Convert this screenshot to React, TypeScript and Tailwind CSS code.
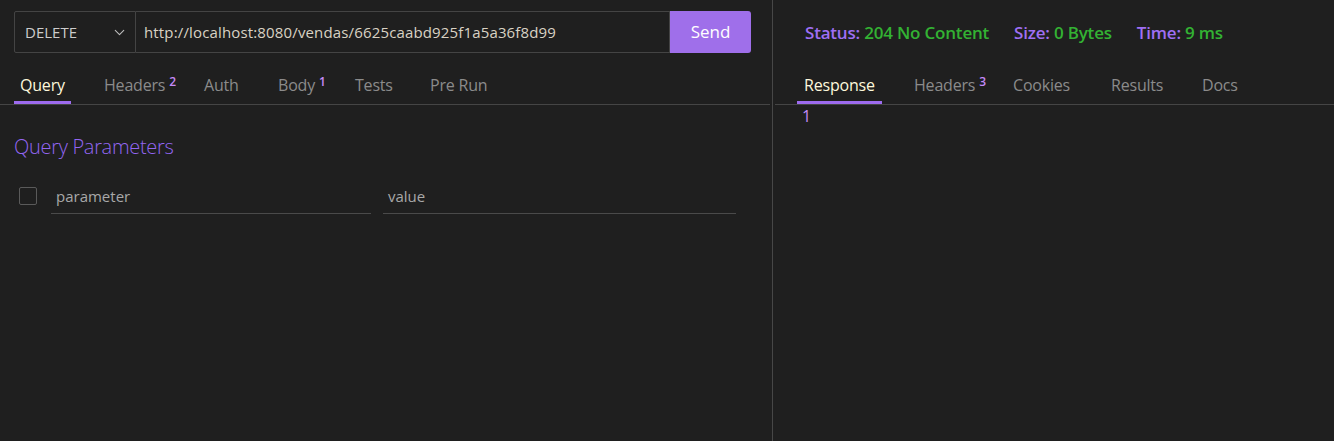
import { ChevronDown } from "lucide-react";

const font = { fontFamily: '"Open Sans", "Noto Sans", sans-serif' };

function Tab({ label, sup, active, w, pad = "px-[6px]" }: { label: string; sup?: string; active?: boolean; w?: string; pad?: string }) {
  return (
    <div className={"flex h-[50px] " + (w ?? "")}>
      <div
        className={
          "flex h-[50px] items-center border-b-[3px] pt-[14px] text-[16px] " +
          pad +
          (active ? " border-[#9d6bef] text-[#fdf8dc]" : " border-transparent text-[#8b8b8b]")
        }
      >
        <span className="tracking-[-0.2px]">{label}</span>
        {sup && <span className="relative -top-[3px] ml-[4px] text-[12px] font-semibold text-[#c58af9]">{sup}</span>}
      </div>
    </div>
  );
}

export default function App() {
  return (
    <div className="flex h-[441px] w-[1334px] bg-[#1f1f1f]" style={font}>
      {/* request panel */}
      <div className="w-[772px] shrink-0">
        <div className="flex pl-[14px] pt-[11px]">
          <div className="flex h-[42px] w-[122px] items-center justify-between rounded-l-[2px] border border-[#444] pl-[10px] pr-[7px] text-[15px] text-[#cccccc]">
            DELETE
            <ChevronDown size={17} strokeWidth={1.5} className="text-[#bdbdbd]" />
          </div>
          <div className="flex h-[42px] w-[534px] items-center border-y border-r border-[#444] pl-[8px] text-[15px] tracking-[0.15px] text-[#d9d2c4]">
            http://localhost:8080/vendas/6625caabd925f1a5a36f8d99
          </div>
          <button className="h-[42px] w-[81px] rounded-r-[3px] bg-[#9f6fea] text-[17px] text-white">Send</button>
        </div>

        <div className="mr-[2px] mt-[1px] flex border-b border-[#454545] pl-[14px]">
          <Tab label="Query" active w="w-[84px]" />
          <Tab label="Headers" sup="2" w="w-[100px]" />
          <Tab label="Auth" w="w-[74px]" />
          <Tab label="Body" sup="1" w="w-[77px]" />
          <Tab label="Tests" w="w-[75px]" />
          <Tab label="Pre Run" />
        </div>

        <div className="pl-[14px] pt-[27px] text-[20px] font-light tracking-[-0.3px] text-[#9366f2]">Query Parameters</div>

        <div className="mt-[16px] flex items-center pl-[19px]">
          <div className="h-[18px] w-[18px] rounded-[2px] border border-[#5a5a5a]" />
          <div className="ml-[14px] flex h-[36px] w-[320px] items-center border-b border-[#4a4a4a] pl-[5px] pt-[1px] text-[15px] text-[#a8a8a8]">
            parameter
          </div>
          <div className="ml-[12px] flex h-[36px] w-[353px] items-center border-b border-[#4a4a4a] pl-[5px] pt-[1px] text-[15px] text-[#a8a8a8]">
            value
          </div>
        </div>
      </div>

      <div className="w-px shrink-0 bg-[#474747]" />

      {/* response panel */}
      <div className="flex-1 pl-[2px]">
        <div className="flex h-[53px] items-center gap-[25px] pl-[30px] pt-[13px] text-[17px] font-semibold tracking-[-0.2px]">
          <span className="text-[#9f6ff4]">
            Status: <span className="text-[#33b233]">204 No Content</span>
          </span>
          <span className="text-[#9f6ff4]">
            Size: <span className="text-[#33b233]">0 Bytes</span>
          </span>
          <span className="text-[#9f6ff4]">
            Time: <span className="text-[#33b233]">9 ms</span>
          </span>
        </div>
        <div className="mt-[1px] flex border-b border-[#454545] pl-[22px]">
          <Tab label="Response" active w="w-[110px]" pad="px-[7px]" />
          <Tab label="Headers" sup="3" w="w-[99px]" pad="px-[7px]" />
          <Tab label="Cookies" w="w-[98px]" pad="px-[7px]" />
          <Tab label="Results" w="w-[91px]" pad="px-[7px]" />
          <Tab label="Docs" pad="px-[7px]" />
        </div>
        <div className="pl-[27px] text-[16px] leading-[22px] text-[#c58af9]">1</div>
      </div>
    </div>
  );
}
